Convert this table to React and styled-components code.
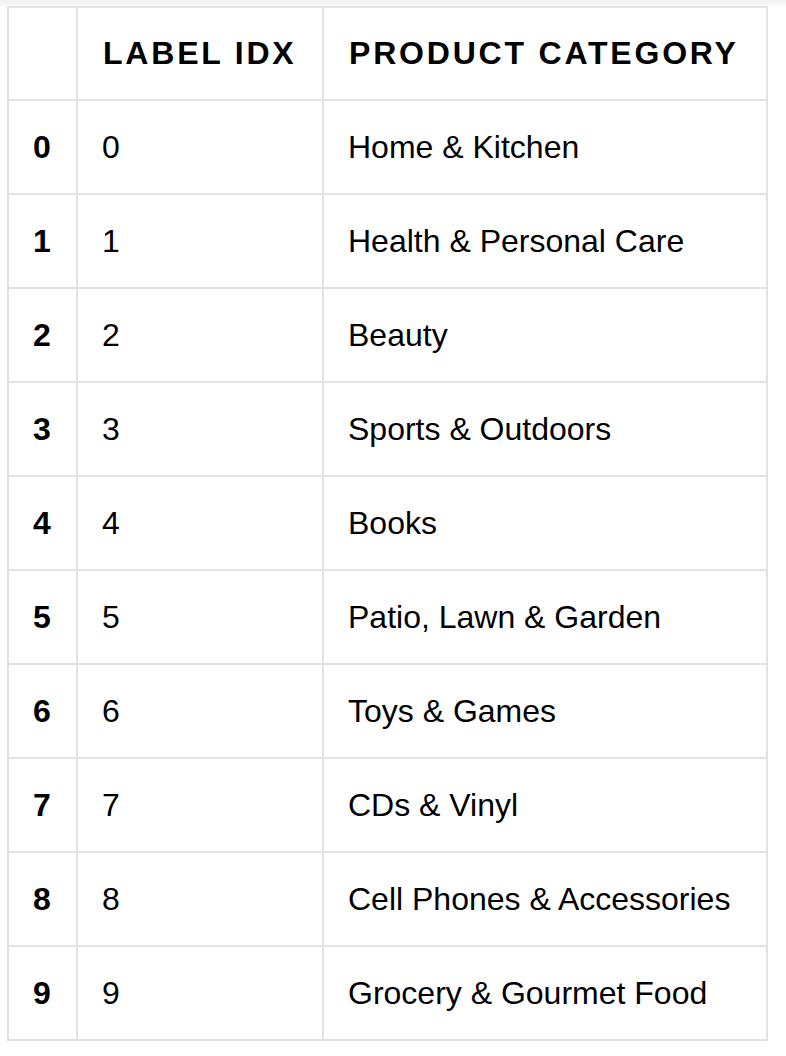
import React from "react"
import styled, { createGlobalStyle } from "styled-components"

const rows = [
    "Home & Kitchen",
    "Health & Personal Care",
    "Beauty",
    "Sports & Outdoors",
    "Books",
    "Patio, Lawn & Garden",
    "Toys & Games",
    "CDs & Vinyl",
    "Cell Phones & Accessories",
    "Grocery & Gourmet Food",
]

const App = () => {
    return (
        <Page>
            <GlobalStyle />
            <Table>
                <colgroup>
                    <col style={{ width: 69 }} />
                    <col style={{ width: 246 }} />
                    <col style={{ width: 444 }} />
                </colgroup>
                <thead>
                    <tr>
                        <HeadCell />
                        <HeadCell>Label Idx</HeadCell>
                        <HeadCell>Product Category</HeadCell>
                    </tr>
                </thead>
                <tbody>
                    {rows.map((name, i) => (
                        <tr key={name}>
                            <IndexCell>{i}</IndexCell>
                            <Cell>{i}</Cell>
                            <Cell>{name}</Cell>
                        </tr>
                    ))}
                </tbody>
            </Table>
        </Page>
    )
}

const GlobalStyle = createGlobalStyle`
    html, body {
        margin: 0;
        background: #fff;
    }
    * {
        box-sizing: border-box;
    }
`

const Page = styled.div`
    padding: 6px 0 0 7px;
    min-height: 1056px;
    background: linear-gradient(#f3f3f3, #f7f7f7 5px, #fff 6px);
    font-family: "Liberation Sans", Arial, sans-serif;
    color: #000;
`

const Table = styled.table`
    width: 761px;
    table-layout: fixed;
    border-collapse: separate;
    border-spacing: 0;
    border-top: 2px solid #e2e2e2;
    border-left: 2px solid #e2e2e2;
    background: #fff;
`

const Cell = styled.td`
    height: 94px;
    padding: 0 0 0 24px;
    border-right: 2px solid #e2e2e2;
    border-bottom: 2px solid #e2e2e2;
    font-size: 32px;
    vertical-align: middle;
    white-space: nowrap;
`

const IndexCell = styled(Cell)`
    font-weight: bold;
`

const HeadCell = styled.th`
    height: 93px;
    padding: 0 0 0 25px;
    border-right: 2px solid #e2e2e2;
    border-bottom: 2px solid #e2e2e2;
    font-size: 32px;
    font-weight: bold;
    text-align: left;
    text-transform: uppercase;
    letter-spacing: 2.8px;
    vertical-align: middle;
    white-space: nowrap;
`

export default App
